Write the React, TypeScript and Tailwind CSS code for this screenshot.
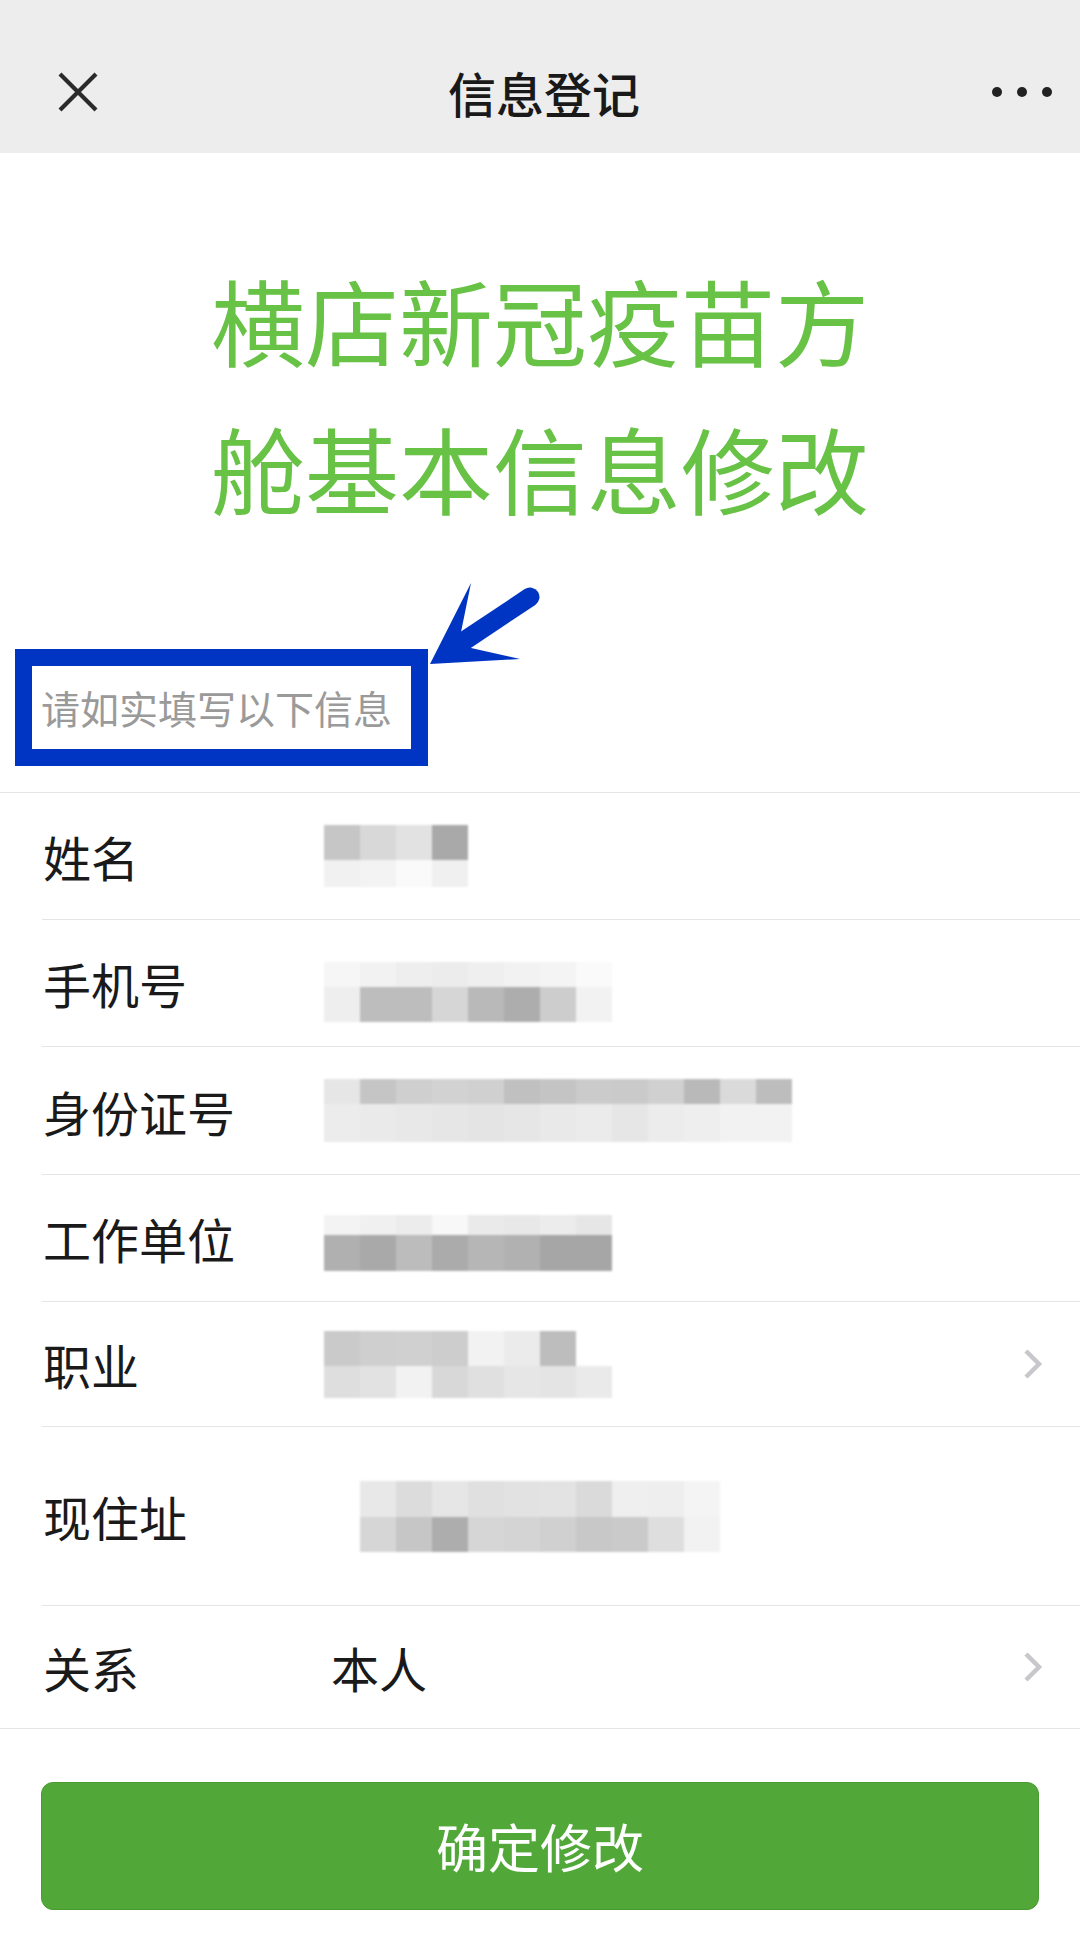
import React from "react";

const font = { fontFamily: '"Noto Sans CJK SC", "Noto Sans", sans-serif' };

type MosaicProps = { rows: { h: number; colors: string[] }[]; className?: string };

function Mosaic({ rows, className }: MosaicProps) {
  return (
    <div className={"flex flex-col blur-[1.2px] " + (className ?? "")}>
      {rows.map((r, i) => (
        <div key={i} className="flex">
          {r.colors.map((c, j) => (
            <div key={j} className="w-[36px] shrink-0" style={{ height: r.h, backgroundColor: c }} />
          ))}
        </div>
      ))}
    </div>
  );
}

function Chevron() {
  return (
    <svg width="20" height="32" viewBox="0 0 20 32" className="shrink-0">
      <path d="M3 3 L16 16 L3 29" fill="none" stroke="#c8c8cc" strokeWidth="4.5" />
    </svg>
  );
}

type RowProps = {
  label: string;
  height: string;
  last?: boolean;
  arrow?: boolean;
  children?: React.ReactNode;
};

function Row({ label, height, last, arrow, children }: RowProps) {
  return (
    <div
      className={
        "ml-[42px] flex items-center pr-[37px] " +
        height +
        (last ? "" : " border-b border-[#e5e5e5]")
      }
    >
      <div className="w-[282px] shrink-0 pl-[1px] text-[48px] leading-none text-[#1a1a1a]">{label}</div>
      <div className="flex flex-1 items-center">{children}</div>
      {arrow && <Chevron />}
    </div>
  );
}

export default function App() {
  return (
    <div className="min-h-[1950px] w-[1080px] bg-white" style={font}>
      {/* nav bar */}
      <div className="flex h-[153px] items-center justify-between bg-[#ededed] pl-[58px] pr-[28px] pt-[30px]">
        <svg width="40" height="40" viewBox="0 0 40 40">
          <path d="M2 2 L38 38 M38 2 L2 38" stroke="#2a2a2a" strokeWidth="4.2" />
        </svg>
        <div className="mr-[2px] text-[48px] font-medium leading-none text-[#191919]">信息登记</div>
        <div className="flex w-[60px] items-center justify-between">
          <span className="h-[10px] w-[10px] rounded-full bg-[#222]" />
          <span className="h-[10px] w-[10px] rounded-full bg-[#222]" />
          <span className="h-[10px] w-[10px] rounded-full bg-[#222]" />
        </div>
      </div>

      {/* heading */}
      <div className="mt-[92px] text-center text-[94px] leading-[148px] text-[#68c246]">
        <div>横店新冠疫苗方</div>
        <div>舱基本信息修改</div>
      </div>

      {/* hint with annotation */}
      <div className="relative mt-[108px]">
        <div className="ml-[15px] flex h-[117px] w-[413px] items-center border-[17px] border-[#0035c4] pl-[9px]">
          <span className="text-[39px] leading-none text-[#9a9a9a]">请如实填写以下信息</span>
        </div>
        <svg
          className="absolute left-[410px] top-[-90px]"
          width="140"
          height="120"
          viewBox="0 0 140 120"
        >
          <line x1="54" y1="82" x2="120" y2="38" stroke="#0035c4" strokeWidth="19" strokeLinecap="round" />
          <polygon points="20,105 61,24 51,73 61,89 110,100" fill="#0035c4" />
        </svg>
      </div>

      {/* form */}
      <div className="mt-[26px] border-y border-[#e5e5e5]">
        <Row label="姓名" height="h-[127px]">
          <Mosaic
            rows={[
              { h: 35, colors: ["#c6c6c6", "#d8d8d8", "#e2e2e2", "#a9a9a9"] },
              { h: 27, colors: ["#f1f1f1", "#f3f3f3", "#fafafa", "#f0f0f0"] },
            ]}
          />
        </Row>
        <Row label="手机号" height="h-[127px]">
          <Mosaic
            className="mt-[18px]"
            rows={[
              { h: 25, colors: ["#f6f6f6", "#f2f2f2", "#eeeeee", "#ececec", "#efefef", "#f2f2f2", "#f4f4f4", "#fafafa"] },
              { h: 35, colors: ["#eeeeee", "#bdbdbd", "#bdbdbd", "#d6d6d6", "#b9b9b9", "#adadad", "#cdcdcd", "#f2f2f2"] },
            ]}
          />
        </Row>
        <Row label="身份证号" height="h-[128px]">
          <Mosaic
            rows={[
              {
                h: 25,
                colors: ["#e6e6e6", "#c5c5c5", "#cfcfcf", "#d2d2d2", "#d0d0d0", "#c0c0c0", "#c4c4c4", "#cbcbcb", "#cacaca", "#d0d0d0", "#b9b9b9", "#dadada", "#bdbdbd"],
              },
              {
                h: 38,
                colors: ["#ececec", "#eaeaea", "#e8e8e8", "#e6e6e6", "#e4e4e4", "#e6e6e6", "#e9e9e9", "#ebebeb", "#e6e6e6", "#ececec", "#eeeeee", "#f2f2f2", "#f2f2f2"],
              },
            ]}
          />
        </Row>
        <Row label="工作单位" height="h-[127px]">
          <Mosaic
            className="mt-[10px]"
            rows={[
              { h: 20, colors: ["#f3f3f3", "#f0f0f0", "#ececec", "#f8f8f8", "#eaeaea", "#e8e8e8", "#ececec", "#e6e6e6"] },
              { h: 36, colors: ["#b0b0b0", "#a9a9a9", "#bcbcbc", "#ababab", "#b6b6b6", "#b1b1b1", "#a6a6a6", "#a6a6a6"] },
            ]}
          />
        </Row>
        <Row label="职业" height="h-[125px]" arrow>
          <Mosaic
            rows={[
              { h: 35, colors: ["#cacaca", "#cfcfcf", "#d0d0d0", "#cdcdcd", "#f2f2f2", "#ebebeb", "#bdbdbd", "#ffffff"] },
              { h: 32, colors: ["#dedede", "#e2e2e2", "#f2f2f2", "#d8d8d8", "#e0e0e0", "#e6e6e6", "#e4e4e4", "#eaeaea"] },
            ]}
          />
        </Row>
        <Row label="现住址" height="h-[179px]">
          <Mosaic
            className="ml-[36px]"
            rows={[
              { h: 36, colors: ["#e8e8e8", "#dcdcdc", "#e6e6e6", "#e0e0e0", "#e2e2e2", "#e3e3e3", "#dadada", "#efefef", "#eeeeee", "#f4f4f4"] },
              { h: 35, colors: ["#d6d6d6", "#c6c6c6", "#adadad", "#d6d6d6", "#d4d4d4", "#d0d0d0", "#c8c8c8", "#cacaca", "#dedede", "#f2f2f2"] },
            ]}
          />
        </Row>
        <Row label="关系" height="h-[122px]" last arrow>
          <span className="ml-[7px] text-[48px] leading-none text-[#1a1a1a]">本人</span>
        </Row>
      </div>

      {/* submit */}
      <div className="px-[41px] pt-[53px]">
        <button className="flex h-[128px] w-full items-center justify-center rounded-[12px] border border-[#489a31] bg-[#51a839] text-[52px] leading-none text-white">
          确定修改
        </button>
      </div>
    </div>
  );
}
